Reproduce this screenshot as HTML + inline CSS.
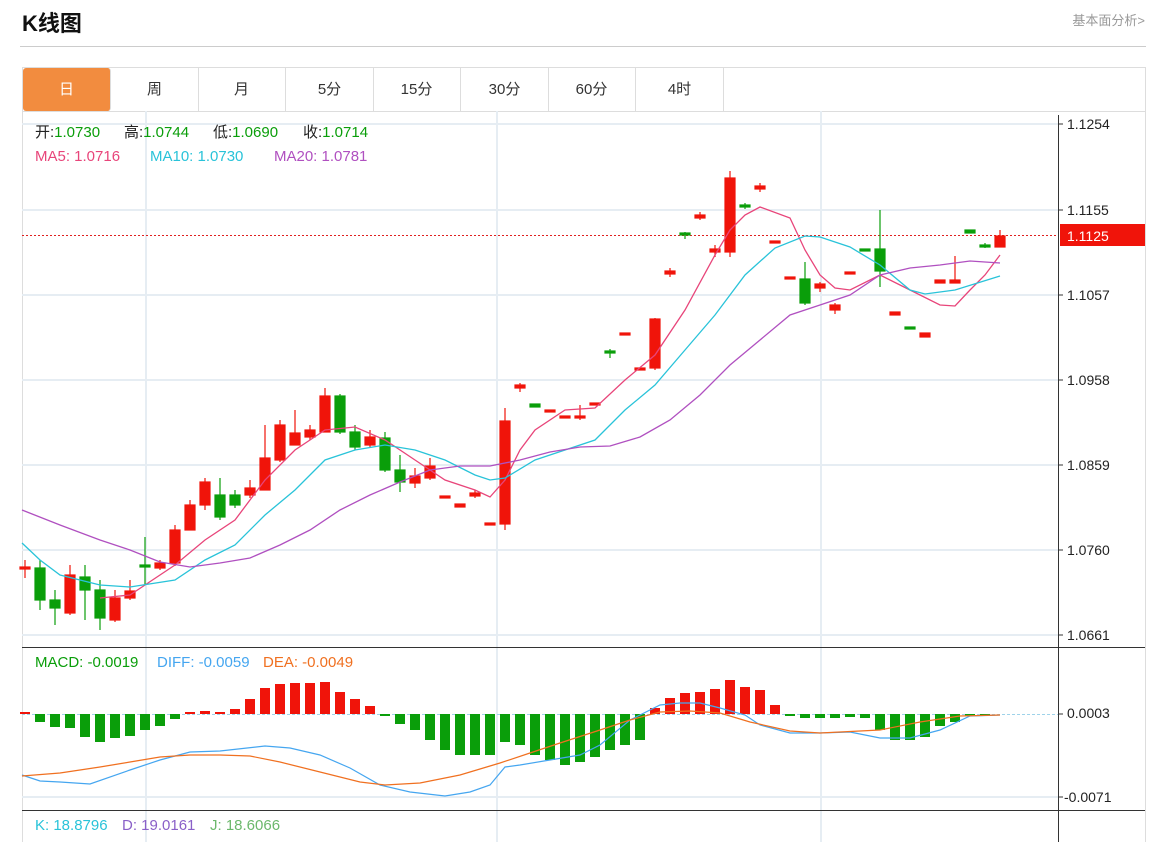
<!DOCTYPE html>
<html><head><meta charset="utf-8"><style>
body{margin:0;background:#fff;width:1161px;height:842px;overflow:hidden;font-family:"Liberation Sans","Noto Sans CJK SC",sans-serif;}
.t{position:absolute;left:22px;top:6px;font-size:22px;font-weight:bold;color:#111;font-family:"Liberation Sans","Noto Sans CJK SC",sans-serif;}
.r{position:absolute;right:16px;top:10px;font-size:13px;color:#999;}
.hl{position:absolute;left:20px;top:46px;width:1126px;height:1px;background:#ccc;}
.tabs{position:absolute;left:22px;top:67px;width:1122px;height:43px;border:1px solid #ddd;}
.tab{position:absolute;top:0;width:87px;height:43px;line-height:43px;text-align:center;font-size:15px;color:#333;border-right:1px solid #ddd;}
.tab.a{background:#f28c3f;color:#fff;border-radius:3px;}
svg{position:absolute;left:0;top:0;}
</style></head><body>
<div class="t">K线图</div>
<div class="r">基本面分析&gt;</div>
<div class="hl"></div>
<div class="tabs">
<div class="tab a" style="left:0">日</div>
<div class="tab" style="left:88px">周</div>
<div class="tab" style="left:175px">月</div>
<div class="tab" style="left:263px">5分</div>
<div class="tab" style="left:350px">15分</div>
<div class="tab" style="left:438px">30分</div>
<div class="tab" style="left:525px">60分</div>
<div class="tab" style="left:613px">4时</div>
</div>
<svg width="1161" height="842" viewBox="0 0 1161 842" font-family="Liberation Sans, Noto Sans CJK SC, sans-serif">
<g stroke="#ddd" fill="none"><line x1="22.5" y1="111" x2="22.5" y2="842"/><line x1="1145.5" y1="111" x2="1145.5" y2="842"/></g>
<g stroke="#e6edf3" stroke-width="2" fill="none">
<line x1="22" y1="124" x2="1058" y2="124"/><line x1="22" y1="210" x2="1058" y2="210"/><line x1="22" y1="295" x2="1058" y2="295"/><line x1="22" y1="380" x2="1058" y2="380"/><line x1="22" y1="465" x2="1058" y2="465"/><line x1="22" y1="550" x2="1058" y2="550"/><line x1="22" y1="635" x2="1058" y2="635"/>
<line x1="22" y1="797" x2="1058" y2="797"/>
<line x1="146" y1="111" x2="146" y2="842"/><line x1="497" y1="111" x2="497" y2="842"/><line x1="821" y1="111" x2="821" y2="842"/>
</g>
<g stroke="#333" stroke-width="1"><line x1="1058.5" y1="115" x2="1058.5" y2="842"/><line x1="22" y1="647.5" x2="1145" y2="647.5"/><line x1="22" y1="810.5" x2="1145" y2="810.5"/>
<line x1="1058" y1="124" x2="1063" y2="124"/><line x1="1058" y1="210" x2="1063" y2="210"/><line x1="1058" y1="295" x2="1063" y2="295"/><line x1="1058" y1="380" x2="1063" y2="380"/><line x1="1058" y1="465" x2="1063" y2="465"/><line x1="1058" y1="550" x2="1063" y2="550"/><line x1="1058" y1="635" x2="1063" y2="635"/><line x1="1058" y1="714" x2="1063" y2="714"/><line x1="1058" y1="797" x2="1063" y2="797"/></g>
<g font-size="14" fill="#222"><text x="1067" y="129">1.1254</text><text x="1067" y="215">1.1155</text><text x="1067" y="300">1.1057</text><text x="1067" y="385">1.0958</text><text x="1067" y="470">1.0859</text><text x="1067" y="555">1.0760</text><text x="1067" y="640">1.0661</text><text x="1067" y="718">0.0003</text><text x="1064" y="802">-0.0071</text></g>
<rect x="1060" y="224" width="85" height="22" fill="#f0140a"/><text x="1067" y="241" font-size="14" fill="#fff">1.1125</text>
<line x1="22" y1="235.5" x2="1058" y2="235.5" stroke="#e02020" stroke-dasharray="2,2"/>
<line x1="22" y1="714.5" x2="1058" y2="714.5" stroke="#9fd3ea" stroke-dasharray="3,2"/>
<g font-size="15">
<text y="137" fill="#222"><tspan x="35">开:</tspan><tspan fill="#0a9e0a">1.0730</tspan><tspan x="124">高:</tspan><tspan fill="#0a9e0a">1.0744</tspan><tspan x="213">低:</tspan><tspan fill="#0a9e0a">1.0690</tspan><tspan x="303">收:</tspan><tspan fill="#0a9e0a">1.0714</tspan></text>
<text y="161"><tspan x="35" fill="#e8457a">MA5:  1.0716</tspan><tspan x="150" fill="#29c3d9">MA10:  1.0730</tspan><tspan x="274" fill="#b050c0">MA20:  1.0781</tspan></text>
<text y="667"><tspan x="35" fill="#0a9e0a">MACD: -0.0019</tspan><tspan x="157" fill="#45a6f0">DIFF: -0.0059</tspan><tspan x="263" fill="#f07020">DEA: -0.0049</tspan></text>
<text y="830"><tspan x="35" fill="#29c3d9">K: 18.8796</tspan><tspan x="122" fill="#8a60c8">D: 19.0161</tspan><tspan x="210" fill="#6cb86c">J: 18.6066</tspan></text>
</g>
<g stroke-width="1.2">
<g stroke="#f0140a" fill="#f0140a">
<line x1="25" y1="560" x2="25" y2="578"/><rect x="20" y="567" width="10" height="2"/>
<line x1="70" y1="565" x2="70" y2="615"/><rect x="65" y="575" width="10" height="38"/>
<line x1="115" y1="590" x2="115" y2="622"/><rect x="110" y="598" width="10" height="22"/>
<line x1="130" y1="580" x2="130" y2="600"/><rect x="125" y="591" width="10" height="7"/>
<line x1="160" y1="560" x2="160" y2="570"/><rect x="155" y="563" width="10" height="5"/>
<line x1="175" y1="525" x2="175" y2="566"/><rect x="170" y="530" width="10" height="33"/>
<line x1="190" y1="500" x2="190" y2="530"/><rect x="185" y="505" width="10" height="25"/>
<line x1="205" y1="478" x2="205" y2="510"/><rect x="200" y="482" width="10" height="23"/>
<line x1="250" y1="480" x2="250" y2="498"/><rect x="245" y="488" width="10" height="7"/>
<line x1="265" y1="425" x2="265" y2="490"/><rect x="260" y="458" width="10" height="32"/>
<line x1="280" y1="420" x2="280" y2="462"/><rect x="275" y="425" width="10" height="35"/>
<line x1="295" y1="410" x2="295" y2="445"/><rect x="290" y="433" width="10" height="12"/>
<line x1="310" y1="425" x2="310" y2="440"/><rect x="305" y="430" width="10" height="7"/>
<line x1="325" y1="388" x2="325" y2="432"/><rect x="320" y="396" width="10" height="36"/>
<line x1="370" y1="430" x2="370" y2="448"/><rect x="365" y="437" width="10" height="8"/>
<line x1="415" y1="468" x2="415" y2="488"/><rect x="410" y="476" width="10" height="7"/>
<line x1="430" y1="458" x2="430" y2="480"/><rect x="425" y="466" width="10" height="12"/>
<rect x="440" y="496" width="10" height="2"/><rect x="455" y="504" width="10" height="3"/>
<line x1="475" y1="490" x2="475" y2="498"/><rect x="470" y="493" width="10" height="3"/>
<rect x="485" y="523" width="10" height="2"/>
<line x1="505" y1="408" x2="505" y2="530"/><rect x="500" y="421" width="10" height="103"/>
<line x1="520" y1="383" x2="520" y2="392"/><rect x="515" y="385" width="10" height="3"/>
<rect x="545" y="410" width="10" height="2"/>
<rect x="560" y="416" width="10" height="2"/>
<line x1="580" y1="405" x2="580" y2="420"/><rect x="575" y="416" width="10" height="2"/>
<rect x="590" y="403" width="10" height="2"/>
<rect x="620" y="333" width="10" height="2"/>
<rect x="635" y="368" width="10" height="2"/>
<line x1="655" y1="318" x2="655" y2="370"/><rect x="650" y="319" width="10" height="49"/>
<line x1="670" y1="268" x2="670" y2="277"/><rect x="665" y="271" width="10" height="3"/>
<line x1="700" y1="212" x2="700" y2="220"/><rect x="695" y="215" width="10" height="3"/>
<line x1="715" y1="245" x2="715" y2="257"/><rect x="710" y="249" width="10" height="3"/>
<line x1="730" y1="171" x2="730" y2="257"/><rect x="725" y="178" width="10" height="74"/>
<line x1="760" y1="183" x2="760" y2="192"/><rect x="755" y="186" width="10" height="3"/>
<rect x="770" y="241" width="10" height="2"/>
<rect x="785" y="277" width="10" height="2"/>
<line x1="820" y1="282" x2="820" y2="292"/><rect x="815" y="284" width="10" height="4"/>
<line x1="835" y1="303" x2="835" y2="314"/><rect x="830" y="305" width="10" height="5"/>
<rect x="845" y="272" width="10" height="2"/>
<rect x="890" y="312" width="10" height="3"/>
<rect x="920" y="333" width="10" height="4"/>
<rect x="935" y="280" width="10" height="3"/>
<line x1="955" y1="256" x2="955" y2="283"/><rect x="950" y="280" width="10" height="3"/>
<line x1="1000" y1="230" x2="1000" y2="247"/><rect x="995" y="236" width="10" height="11"/>
</g>
<g stroke="#0a9e0a" fill="#0a9e0a">
<line x1="40" y1="560" x2="40" y2="610"/><rect x="35" y="568" width="10" height="32"/>
<line x1="55" y1="590" x2="55" y2="625"/><rect x="50" y="600" width="10" height="8"/>
<line x1="85" y1="565" x2="85" y2="620"/><rect x="80" y="577" width="10" height="13"/>
<line x1="100" y1="580" x2="100" y2="630"/><rect x="95" y="590" width="10" height="28"/>
<line x1="145" y1="537" x2="145" y2="585"/><rect x="140" y="565" width="10" height="2"/>
<line x1="220" y1="478" x2="220" y2="520"/><rect x="215" y="495" width="10" height="22"/>
<line x1="235" y1="490" x2="235" y2="508"/><rect x="230" y="495" width="10" height="10"/>
<line x1="340" y1="394" x2="340" y2="434"/><rect x="335" y="396" width="10" height="36"/>
<line x1="355" y1="425" x2="355" y2="450"/><rect x="350" y="432" width="10" height="15"/>
<line x1="385" y1="432" x2="385" y2="472"/><rect x="380" y="438" width="10" height="32"/>
<line x1="400" y1="455" x2="400" y2="492"/><rect x="395" y="470" width="10" height="12"/>
<rect x="530" y="404" width="10" height="3"/>
<line x1="610" y1="349" x2="610" y2="358"/><rect x="605" y="351" width="10" height="2"/>
<line x1="685" y1="232" x2="685" y2="239"/><rect x="680" y="233" width="10" height="2"/>
<line x1="745" y1="203" x2="745" y2="209"/><rect x="740" y="205" width="10" height="2"/>
<line x1="805" y1="262" x2="805" y2="305"/><rect x="800" y="279" width="10" height="24"/>
<rect x="860" y="249" width="10" height="2"/>
<line x1="880" y1="210" x2="880" y2="287"/><rect x="875" y="249" width="10" height="22"/>
<rect x="905" y="327" width="10" height="2"/>
<rect x="965" y="230" width="10" height="3"/>
<line x1="985" y1="243" x2="985" y2="248"/><rect x="980" y="245" width="10" height="2"/>
</g>
</g>
<g fill="none" stroke-width="1.3">
<polyline stroke="#e8457a" points="100,598 130,595 160,575 175,565 205,540 235,520 265,480 295,450 325,430 355,427 385,440 415,460 445,480 475,490 490,497 505,480 520,450 535,430 565,410 595,408 625,380 655,355 685,310 715,255 730,230 745,215 760,207 790,218 805,250 820,275 835,288 850,290 880,275 910,290 940,305 955,306 970,290 985,275 1000,255"/>
<polyline stroke="#29c3d9" points="22,543 40,560 60,575 100,585 130,587 175,580 205,560 235,545 265,515 295,490 325,460 355,450 385,445 415,450 445,460 475,475 490,480 505,478 535,460 565,450 595,440 625,410 655,385 685,350 715,315 745,275 775,248 805,236 820,237 850,247 880,265 910,290 925,294 955,290 1000,276"/>
<polyline stroke="#b050c0" points="22,510 60,525 100,540 130,550 160,562 190,567 220,563 250,558 280,545 310,530 340,510 370,495 400,482 430,470 460,466 490,466 520,460 550,452 580,447 610,446 640,437 670,420 700,395 730,365 760,340 790,315 820,305 850,295 880,275 910,268 940,265 970,261 1000,263"/>
</g>
<g fill="#f0140a">
<rect x="20" y="712" width="10" height="2"/><rect x="185" y="712" width="10" height="2"/><rect x="200" y="711" width="10" height="3"/><rect x="215" y="712" width="10" height="2"/><rect x="230" y="709" width="10" height="5"/><rect x="245" y="699" width="10" height="15"/><rect x="260" y="688" width="10" height="26"/><rect x="275" y="684" width="10" height="30"/><rect x="290" y="683" width="10" height="31"/><rect x="305" y="683" width="10" height="31"/><rect x="320" y="682" width="10" height="32"/><rect x="335" y="692" width="10" height="22"/><rect x="350" y="699" width="10" height="15"/><rect x="365" y="706" width="10" height="8"/>
<rect x="650" y="708" width="10" height="6"/><rect x="665" y="698" width="10" height="16"/><rect x="680" y="693" width="10" height="21"/><rect x="695" y="692" width="10" height="22"/><rect x="710" y="689" width="10" height="25"/><rect x="725" y="680" width="10" height="34"/><rect x="740" y="687" width="10" height="27"/><rect x="755" y="690" width="10" height="24"/><rect x="770" y="705" width="10" height="9"/>
</g>
<g fill="#0a9e0a">
<rect x="35" y="714" width="10" height="8"/><rect x="50" y="714" width="10" height="13"/><rect x="65" y="714" width="10" height="14"/><rect x="80" y="714" width="10" height="23"/><rect x="95" y="714" width="10" height="28"/><rect x="110" y="714" width="10" height="24"/><rect x="125" y="714" width="10" height="22"/><rect x="140" y="714" width="10" height="16"/><rect x="155" y="714" width="10" height="12"/><rect x="170" y="714" width="10" height="5"/>
<rect x="380" y="714" width="10" height="2"/><rect x="395" y="714" width="10" height="10"/><rect x="410" y="714" width="10" height="16"/><rect x="425" y="714" width="10" height="26"/><rect x="440" y="714" width="10" height="36"/><rect x="455" y="714" width="10" height="41"/><rect x="470" y="714" width="10" height="41"/><rect x="485" y="714" width="10" height="41"/><rect x="500" y="714" width="10" height="28"/><rect x="515" y="714" width="10" height="31"/><rect x="530" y="714" width="10" height="41"/><rect x="545" y="714" width="10" height="46"/><rect x="560" y="714" width="10" height="51"/><rect x="575" y="714" width="10" height="48"/><rect x="590" y="714" width="10" height="43"/><rect x="605" y="714" width="10" height="36"/><rect x="620" y="714" width="10" height="31"/><rect x="635" y="714" width="10" height="26"/>
<rect x="785" y="714" width="10" height="2"/><rect x="800" y="714" width="10" height="4"/><rect x="815" y="714" width="10" height="4"/><rect x="830" y="714" width="10" height="4"/><rect x="845" y="714" width="10" height="3"/><rect x="860" y="714" width="10" height="4"/><rect x="875" y="714" width="10" height="16"/><rect x="890" y="714" width="10" height="26"/><rect x="905" y="714" width="10" height="26"/><rect x="920" y="714" width="10" height="23"/><rect x="935" y="714" width="10" height="12"/><rect x="950" y="714" width="10" height="8"/><rect x="965" y="714" width="10" height="2"/><rect x="980" y="714" width="10" height="1"/>
</g>
<g fill="none" stroke-width="1.2">
<polyline stroke="#45a6f0" points="22,775 40,781 60,782 90,784 130,770 160,760 190,752 220,751 265,746 290,748 320,755 350,768 380,785 410,792 445,796 470,792 490,785 505,767 520,765 550,760 580,755 600,745 630,720 660,705 680,703 700,703 720,708 745,715 760,725 790,733 820,733 850,732 880,738 910,738 940,730 970,716 1000,715"/>
<polyline stroke="#f07020" points="22,776 60,773 100,767 130,762 160,757 190,755 220,755 250,756 280,762 320,772 360,782 385,785 420,783 460,775 500,763 530,753 560,743 600,730 630,720 660,712 690,711 720,713 750,722 790,731 820,733 880,730 920,722 960,716 1000,715"/>
</g>
</svg>
</body></html>
